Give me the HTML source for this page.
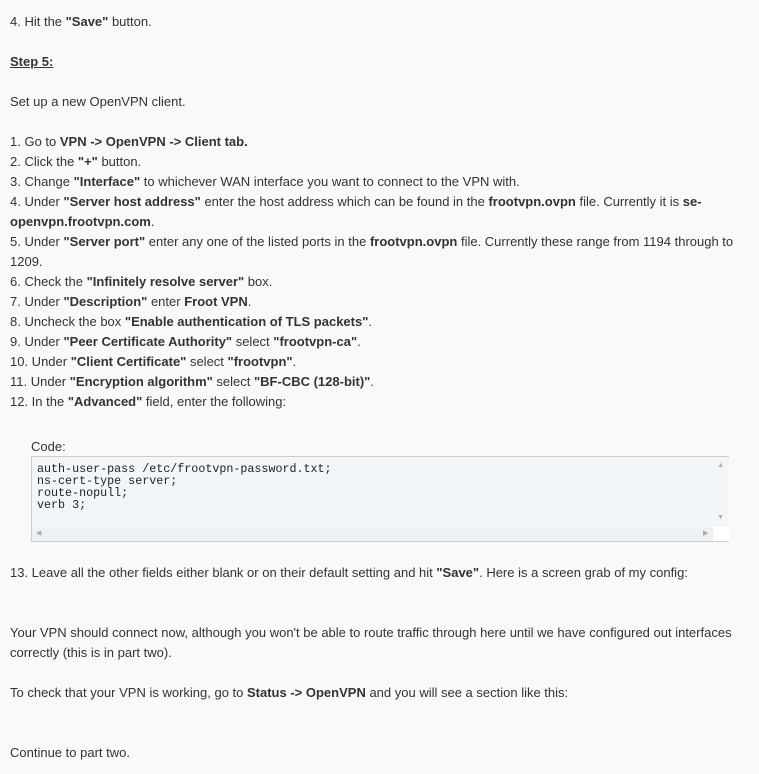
<!DOCTYPE html>
<html><head><style>
body{margin:0;background:#f9f9f9;color:#333;font:13px/20px "Liberation Sans",sans-serif;width:759px;height:774px;overflow:hidden}
.c{position:absolute;left:10px;top:12px;width:740px}
p{margin:0}
b{font-weight:bold}
.code{position:absolute;left:31px;top:456px;width:697px;height:84px;border:1px solid #ccc;border-right:none;background:#f3f6f9}
.code pre{margin:0;position:absolute;left:5px;top:6px;font:11.7px/12px "Liberation Mono",monospace;color:#222}
.vs{position:absolute;right:0;top:0;width:16px;height:70px;background:#f3f6f9}
.hs{position:absolute;left:0;bottom:0;width:681px;height:14px;background:#eef1f4}
.corner{position:absolute;right:0;bottom:0;width:16px;height:14px;background:#fff}
.ar{position:absolute;color:#aaa;font-size:7px;line-height:8px}
</style></head><body>
<div class="c">
<p>4. Hit the <b>"Save"</b> button.</p>
<p style="height:20px"></p>
<p><b><u>Step 5:</u></b></p>
<p style="height:20px"></p>
<p>Set up a new OpenVPN client.</p>
<p style="height:20px"></p>
<p>1. Go to <b>VPN -&gt; OpenVPN -&gt; Client tab.</b><br>
2. Click the <b>"+"</b> button.<br>
3. Change <b>"Interface"</b> to whichever WAN interface you want to connect to the VPN with.<br>
4. Under <b>"Server host address"</b> enter the host address which can be found in the <b>frootvpn.ovpn</b> file. Currently it is <b>se-openvpn.frootvpn.com</b>.<br>
5. Under <b>"Server port"</b> enter any one of the listed ports in the <b>frootvpn.ovpn</b> file. Currently these range from 1194 through to 1209.<br>
6. Check the <b>"Infinitely resolve server"</b> box.<br>
7. Under <b>"Description"</b> enter <b>Froot VPN</b>.<br>
8. Uncheck the box <b>"Enable authentication of TLS packets"</b>.<br>
9. Under <b>"Peer Certificate Authority"</b> select <b>"frootvpn-ca"</b>.<br>
10. Under <b>"Client Certificate"</b> select <b>"frootvpn"</b>.<br>
11. Under <b>"Encryption algorithm"</b> select <b>"BF-CBC (128-bit)"</b>.<br>
12. In the <b>"Advanced"</b> field, enter the following:</p>
</div>
<div style="position:absolute;left:31px;top:437px">Code:</div>
<div class="code"><pre>auth-user-pass /etc/frootvpn-password.txt;
ns-cert-type server;
route-nopull;
verb 3;</pre>
<div class="vs"></div><div class="hs"></div><div class="corner"></div>
<div class="ar" style="right:5px;top:5px">▲</div>
<div class="ar" style="right:5px;top:57px">▼</div>
<div class="ar" style="left:4px;bottom:3px">◀</div>
<div class="ar" style="left:671px;bottom:3px">▶</div>
</div>
<div style="position:absolute;left:10px;top:563px;width:740px">
<p>13. Leave all the other fields either blank or on their default setting and hit <b>"Save"</b>. Here is a screen grab of my config:</p>
<p style="height:40px"></p>
<p>Your VPN should connect now, although you won't be able to route traffic through here until we have configured out interfaces correctly (this is in part two).</p>
<p style="height:20px"></p>
<p>To check that your VPN is working, go to <b>Status -&gt; OpenVPN</b> and you will see a section like this:</p>
<p style="height:40px"></p>
<p>Continue to part two.</p>
</div>
</body></html>
